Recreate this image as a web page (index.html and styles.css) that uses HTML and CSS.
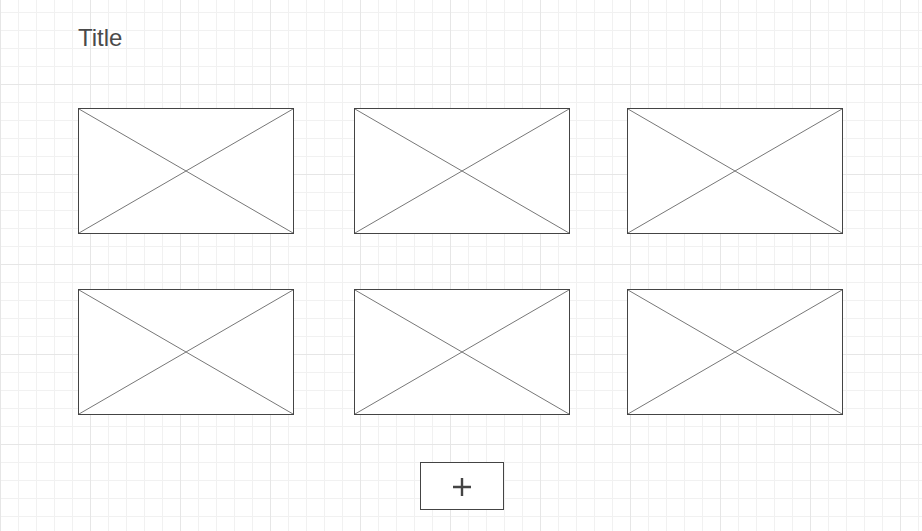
FILE: index.html
```html
<!DOCTYPE html>
<html lang="en">
<head>
    <meta charset="UTF-8">
    <meta name="viewport" content="width=device-width, initial-scale=1.0">
    <title>Wireframe</title>
    <link rel="stylesheet" href="styles.css">
</head>
<body>
    <div class="page">
        <h1 class="title">Title</h1>

        <div class="gallery">
            <div class="placeholder">
                <svg viewBox="0 0 214 124" preserveAspectRatio="none"><line x1="0" y1="0" x2="214" y2="124"/><line x1="214" y1="0" x2="0" y2="124"/></svg>
            </div>
            <div class="placeholder">
                <svg viewBox="0 0 214 124" preserveAspectRatio="none"><line x1="0" y1="0" x2="214" y2="124"/><line x1="214" y1="0" x2="0" y2="124"/></svg>
            </div>
            <div class="placeholder">
                <svg viewBox="0 0 214 124" preserveAspectRatio="none"><line x1="0" y1="0" x2="214" y2="124"/><line x1="214" y1="0" x2="0" y2="124"/></svg>
            </div>
            <div class="placeholder">
                <svg viewBox="0 0 214 124" preserveAspectRatio="none"><line x1="0" y1="0" x2="214" y2="124"/><line x1="214" y1="0" x2="0" y2="124"/></svg>
            </div>
            <div class="placeholder">
                <svg viewBox="0 0 214 124" preserveAspectRatio="none"><line x1="0" y1="0" x2="214" y2="124"/><line x1="214" y1="0" x2="0" y2="124"/></svg>
            </div>
            <div class="placeholder">
                <svg viewBox="0 0 214 124" preserveAspectRatio="none"><line x1="0" y1="0" x2="214" y2="124"/><line x1="214" y1="0" x2="0" y2="124"/></svg>
            </div>
        </div>

        <button class="add-button" type="button" aria-label="Add">
            <svg viewBox="0 0 20 20" width="20" height="20"><path d="M10 1v18M1 10h18"/></svg>
        </button>
    </div>
</body>
</html>
```

FILE: styles.css
```css
html, body {
    height: 100%;
}
body {
    margin: 0;
    font-family: "Liberation Sans", Arial, sans-serif;
    color: #444;
    background-color: #fff;
    background-image:
        linear-gradient(to right, #e6e6e6 1px, transparent 1px),
        linear-gradient(to bottom, #e6e6e6 1px, transparent 1px),
        linear-gradient(to right, #f1f1f1 1px, transparent 1px),
        linear-gradient(to bottom, #f1f1f1 1px, transparent 1px);
    background-size: 90px 90px, 90px 90px, 18px 18px, 18px 18px;
    background-position: 0 0, 0 84px, 0 0, 0 12px;
}
.page {
    padding: 24px 0 0 78px;
    width: 765px;
}
.title {
    margin: 0;
    font-size: 24px;
    font-weight: normal;
    line-height: 28px;
    color: #4a4a4a;
}
.gallery {
    display: grid;
    grid-template-columns: 276px 273px 216px;
    row-gap: 55px;
    margin-top: 56px;
}
.placeholder {
    box-sizing: border-box;
    width: 216px;
    height: 126px;
    border: 1px solid #444;
    background-color: #fff;
}
.placeholder svg {
    display: block;
    width: 214px;
    height: 124px;
}
.placeholder line {
    stroke: #777;
    stroke-width: 1;
}
.add-button {
    display: flex;
    align-items: center;
    justify-content: center;
    box-sizing: border-box;
    width: 84px;
    height: 48px;
    margin: 47px 0 0 342px;
    padding: 1px 0 0 0;
    border: 1px solid #444;
    background-color: #fff;
    cursor: pointer;
}
.add-button path {
    fill: none;
    stroke: #444;
    stroke-width: 2.4;
}
```
